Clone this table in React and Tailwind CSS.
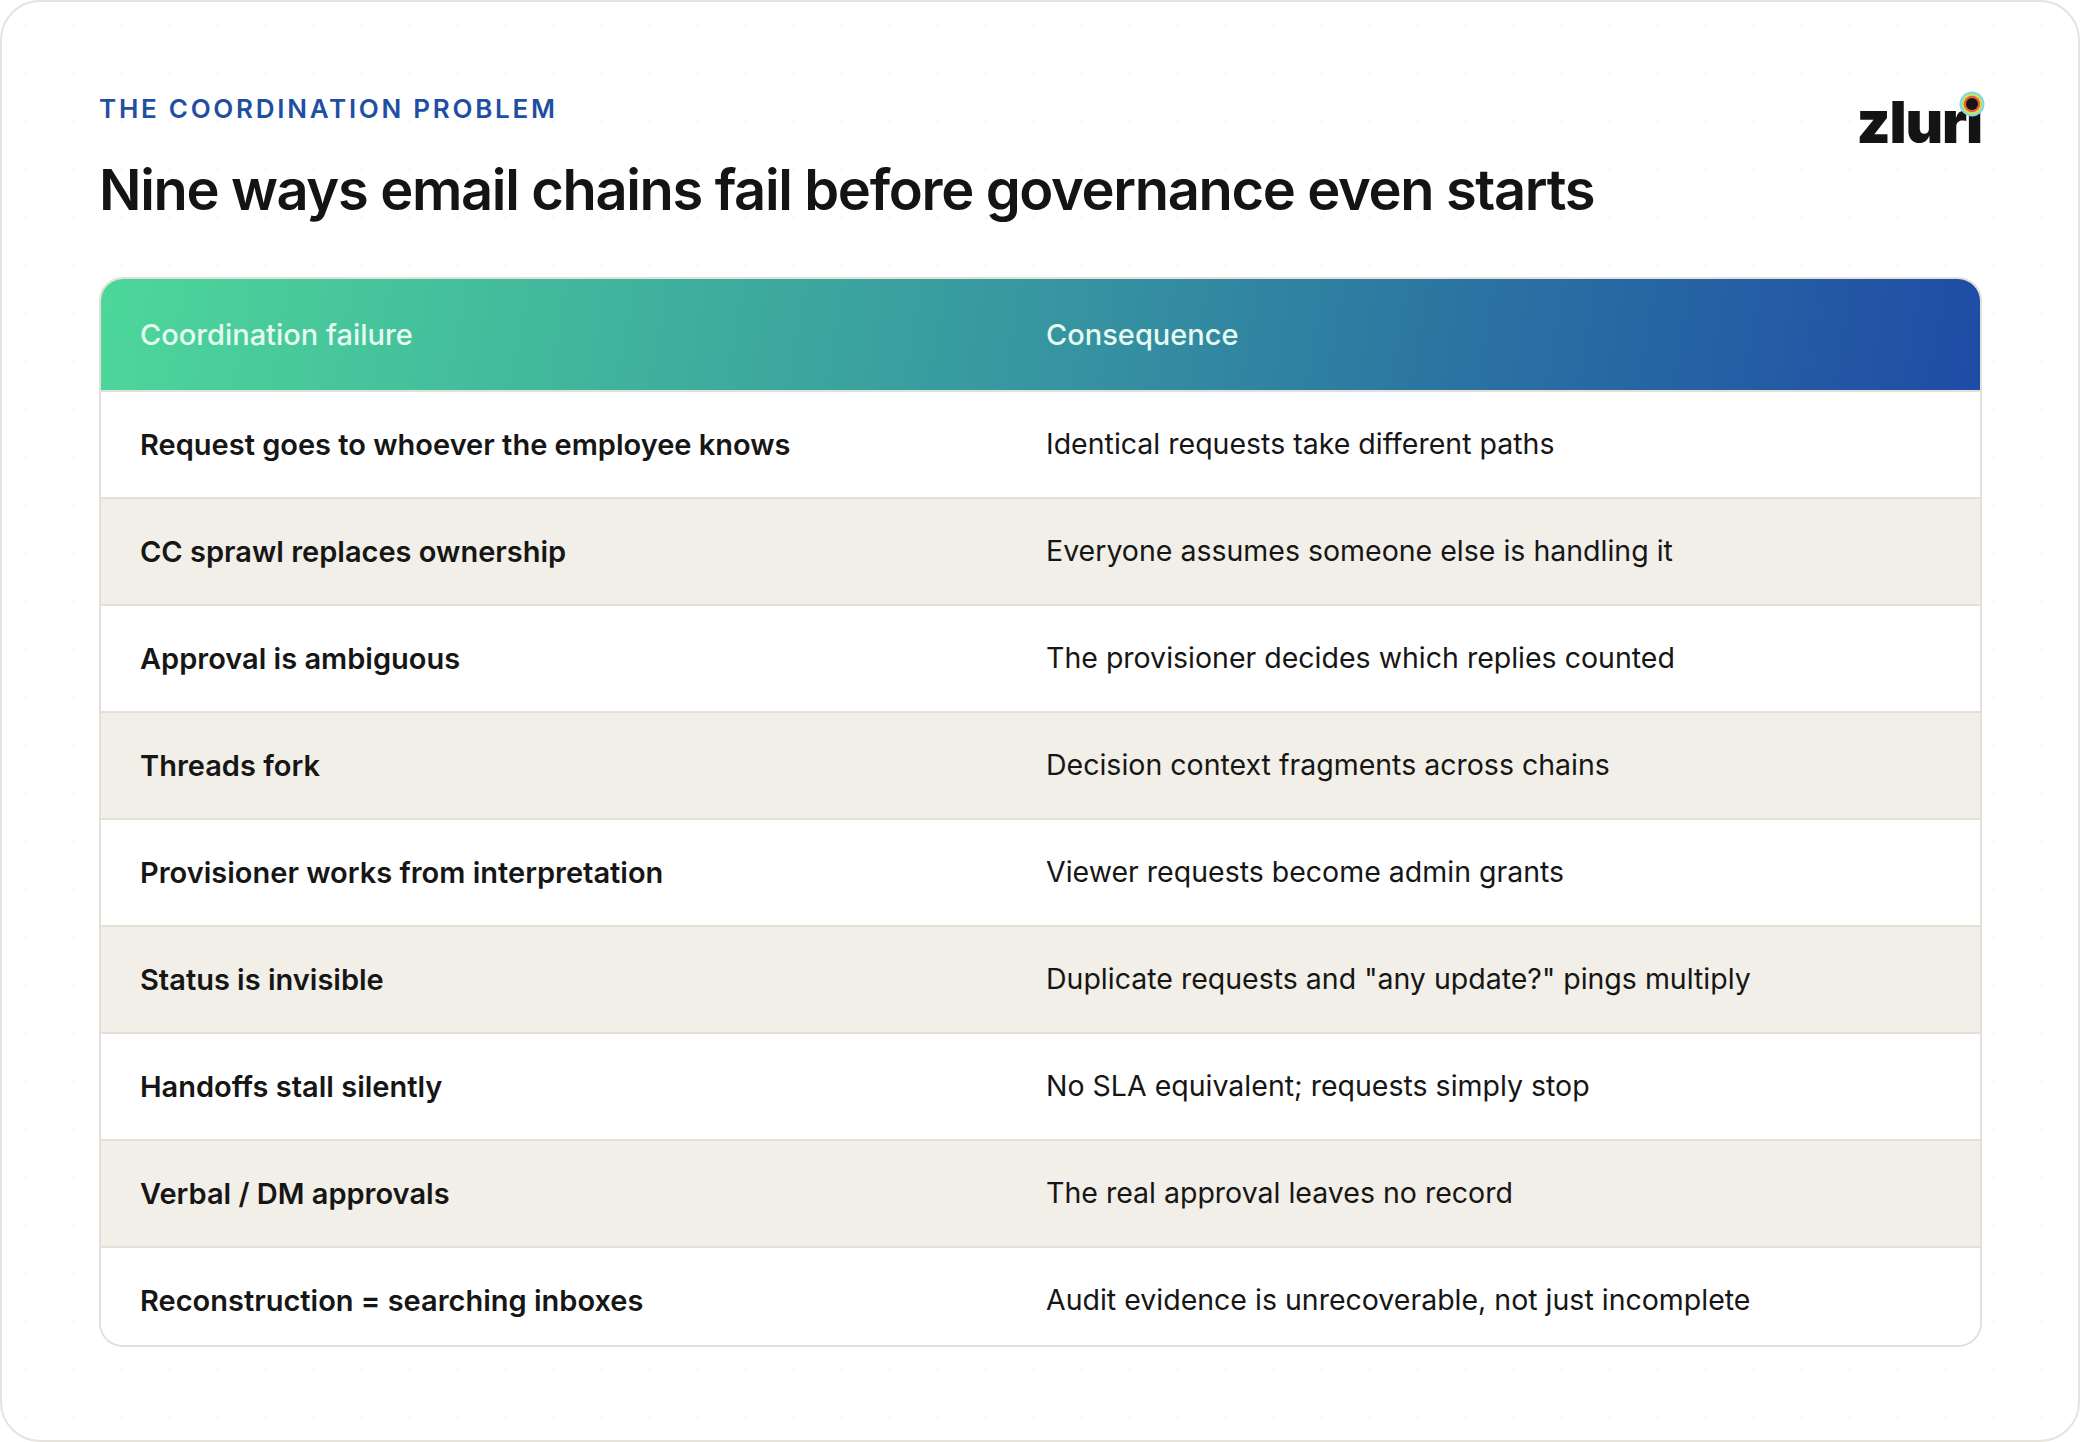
import React from "react";

const rows = [
  ["Request goes to whoever the employee knows", "Identical requests take different paths"],
  ["CC sprawl replaces ownership", "Everyone assumes someone else is handling it"],
  ["Approval is ambiguous", "The provisioner decides which replies counted"],
  ["Threads fork", "Decision context fragments across chains"],
  ["Provisioner works from interpretation", "Viewer requests become admin grants"],
  ["Status is invisible", "Duplicate requests and \"any update?\" pings multiply"],
  ["Handoffs stall silently", "No SLA equivalent; requests simply stop"],
  ["Verbal / DM approvals", "The real approval leaves no record"],
  ["Reconstruction = searching inboxes", "Audit evidence is unrecoverable, not just incomplete"],
];

function Logo() {
  return (
    <div className="relative mt-[-3px] inline-block">
      <span className="block font-[Inter,'Noto_Sans',sans-serif] text-[58px] font-black leading-none tracking-[-0.02em] text-[#141414]">
        zlurı
      </span>
      <svg
        className="absolute right-[-3px] top-[-2px] h-[26px] w-[26px]"
        viewBox="0 0 26 26"
      >
        <circle cx="13" cy="13" r="12.5" fill="#7fd8f0" />
        <circle cx="13" cy="13" r="10.5" fill="#c9e35a" />
        <circle cx="13" cy="13" r="8.3" fill="#ef5a3c" />
        <circle cx="13" cy="13" r="6" fill="#161616" />
      </svg>
    </div>
  );
}

export default function App() {
  return (
    <div className="h-[1442px] w-[2080px] bg-white">
      <div className="flex h-full w-full flex-col rounded-[40px] border-2 border-[#e6e3db] bg-[radial-gradient(#f1f4f8_1.5px,transparent_1.6px)] bg-[size:48px_48px] pl-[97px] pr-[96px] pt-[94px] font-[Inter,'Noto_Sans',sans-serif]">
        <div className="flex items-start justify-between">
          <div className="flex flex-col">
            <div className="text-[26px] font-semibold leading-none tracking-[0.105em] text-[#1f4fa3]">
              THE COORDINATION PROBLEM
            </div>
            <h1 className="mt-[40px] text-[56px] font-semibold leading-none tracking-[-0.024em] text-[#141414]">
              Nine ways email chains fail before governance even starts
            </h1>
          </div>
          <Logo />
        </div>

        <div className="mt-[59px] h-[1070px] overflow-hidden rounded-[24px] border-2 border-[#e3e0d8] bg-white">
          <div className="grid h-[111px] grid-cols-[906px_1fr] items-center bg-[linear-gradient(100deg,#4dd79a_0%,#3fb09d_30%,#3796a1_50%,#2b74a2_72%,#1f4ca6_100%)] pl-[39px] text-[29px] font-medium text-[#e4fbf0]">
            <div>Coordination failure</div>
            <div>Consequence</div>
          </div>
          {rows.map(([a, b], i) => (
            <div
              key={i}
              className={`grid h-[107px] shrink-0 grid-cols-[906px_1fr] items-center border-t-2 border-[#e3e0d8] pl-[39px] leading-none text-[#161616] ${
                i % 2 === 1 ? "bg-[#f1efe7]" : "bg-white"
              }`}
            >
              <div className="text-[29px] font-semibold">{a}</div>
              <div className="text-[28.5px] font-normal">{b}</div>
            </div>
          ))}
        </div>
      </div>
    </div>
  );
}
